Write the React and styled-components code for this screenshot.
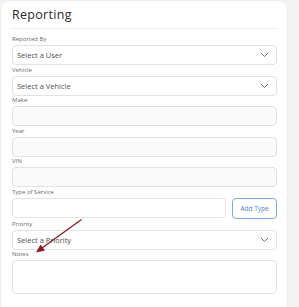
import React from "react";
import styled, { createGlobalStyle } from "styled-components";

const Global = createGlobalStyle`
  html, body { margin: 0; padding: 0; background: #f4f4f4; }
  body { font-family: "Open Sans", "Liberation Sans", sans-serif; width: 299px; height: 307px; overflow: hidden; }
  * { box-sizing: border-box; }
`;

const Page = styled.div`
  display: flex;
  width: 299px;
  height: 307px;
  position: relative;
`;

const Card = styled.div`
  width: 288px;
  height: 320px;
  background: #fff;
  border: 1px solid #ececec;
  border-radius: 9px;
  padding: 6px 10px 0 11px;
  display: flex;
  flex-direction: column;
`;

const Title = styled.h2`
  margin: 0;
  font-size: 12.5px;
  font-weight: 400;
  color: #2b2b2b;
  letter-spacing: 0.3px;
  padding-bottom: 6px;
  border-bottom: 1px solid #ededed;
  line-height: 15px;
`;

const Fields = styled.div`
  display: flex;
  flex-direction: column;
  gap: 1.6px;
  padding-top: 7px;
`;

const Field = styled.div`
  display: flex;
  flex-direction: column;
  gap: 2px;
`;

const Label = styled.label`
  font-size: 6px;
  color: #6b6b6b;
  line-height: 7px;
  height: 7px;
`;

const Row = styled.div`
  display: flex;
  gap: 6px;
  align-items: stretch;
`;

const Box = styled.div`
  flex: 1 1 auto;
  min-width: 0;
  height: ${(p) => p.$h || 20}px;
  border: 1px solid #e2e2e2;
  border-radius: 4px;
  background: ${(p) => (p.$fill ? "#fafafa" : "#fff")};
  display: flex;
  align-items: center;
  justify-content: space-between;
  padding: 0 7px 0 4px;
  font-size: 7.5px;
  color: #505050;
`;

const Button = styled.button`
  flex: 0 0 45px;
  height: 21px;
  border: 1px solid #7aa7e6;
  border-radius: 4px;
  background: #fff;
  color: #4f86d4;
  font-family: inherit;
  font-size: 6.5px;
  padding: 0;
`;

const Chevron = () => (
  <svg width="9" height="6" viewBox="0 0 9 6" fill="none">
    <path d="M1 1l3.5 3.5L8 1" stroke="#6b6b6b" strokeWidth="1" />
  </svg>
);

const Side = styled.div`
  flex: 1;
  background: #f4f4f4;
`;

const Arrow = styled.svg`
  position: absolute;
  left: 0;
  top: 0;
  pointer-events: none;
`;

const Select = ({ text }) => (
  <Box>
    <span>{text}</span>
    <Chevron />
  </Box>
);

export default function App() {
  return (
    <>
      <Global />
      <Page>
        <Card>
          <Title>Reporting</Title>
          <Fields>
            <Field>
              <Label>Reported By</Label>
              <Select text="Select a User" />
            </Field>
            <Field>
              <Label>Vehicle</Label>
              <Select text="Select a Vehicle" />
            </Field>
            <Field>
              <Label>Make</Label>
              <Box $fill />
            </Field>
            <Field>
              <Label>Year</Label>
              <Box $fill />
            </Field>
            <Field>
              <Label>VIN</Label>
              <Box $fill />
            </Field>
            <Field>
              <Label>Type of Service</Label>
              <Row>
                <Box />
                <Button>Add Type</Button>
              </Row>
            </Field>
            <Field>
              <Label>Priority</Label>
              <Select text="Select a Priority" />
            </Field>
            <Field>
              <Label>Notes</Label>
              <Box $h={34} />
            </Field>
          </Fields>
        </Card>
        <Side />
        <Arrow width="299" height="307" viewBox="0 0 299 307">
          <line x1="81.5" y1="219.5" x2="42" y2="248" stroke="#8b1c1c" strokeWidth="1.3" />
          <polygon points="36,252.5 40.5,244.5 45,250.5" fill="#8b1c1c" />
        </Arrow>
      </Page>
    </>
  );
}
